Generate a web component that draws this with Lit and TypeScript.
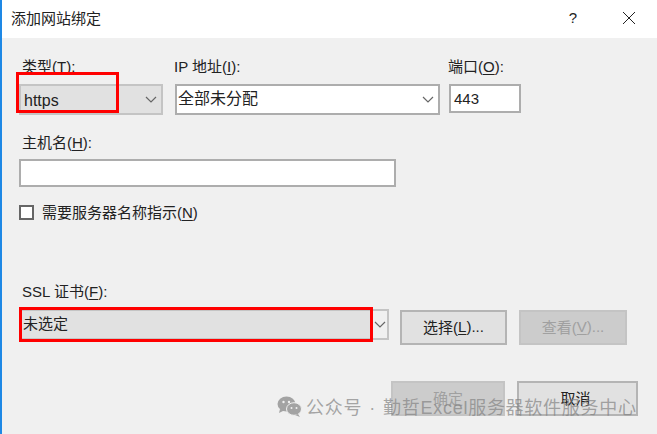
import { LitElement, html, css } from 'lit';
import { customElement } from 'lit/decorators.js';

const chevron = html`<svg class="chev" width="12" height="7" viewBox="0 0 12 7"><path d="M1 1l5 5 5-5" fill="none" stroke="#666" stroke-width="1.2"/></svg>`;

@customElement('app-root')
export class AppRoot extends LitElement {
  static styles = css`
    :host {
      display: block;
      width: 657px;
      height: 434px;
      position: relative;
      overflow: hidden;
      background: #f0f0f0;
      color: #222;
      font: 15px "Liberation Sans", "Noto Sans CJK SC", sans-serif;
      border-left: 2px solid #1e88e5;
      box-sizing: border-box;
    }

    header {
      height: 38px;
      background: #fff;
      display: flex;
      align-items: center;
      padding-left: 9px;
    }

    header span {
      flex-grow: 1;
      padding-bottom: 3px;
    }

    header .help {
      flex-grow: 0;
      font-size: 15px;
      margin-right: 45px;
    }

    header svg {
      margin-right: 21px;
      margin-bottom: 3px;
    }

    main {
      padding: 20px 0 0 17px;
    }

    .row {
      display: flex;
      align-items: flex-start;
    }

    .field {
      display: flex;
      flex-direction: column;
    }

    label {
      display: block;
      height: 18px;
      line-height: 18px;
      margin: 0 0 8px 3px;
      white-space: nowrap;
    }

    label.flush {
      margin-left: -1px;
    }

    u {
      text-underline-offset: 2px;
    }

    .box {
      box-sizing: border-box;
      display: flex;
      align-items: center;
      background: #fff;
      border: 2px solid #adadad;
      padding-left: 3px;
    }

    .box .text {
      flex-grow: 1;
    }

    .big {
      font-size: 16px;
    }

    .chev {
      margin-right: 4px;
    }

    .type {
      width: 144px;
      height: 31px;
      background: #e1e1e1;
      border-color: #c4c4c4;
      margin-right: 12px;
    }

    .type .text {
      padding-top: 2px;
    }

    .ip {
      width: 265px;
      height: 31px;
      margin-right: 9px;
      padding-left: 1px;
    }

    .ip .text {
      padding-bottom: 5px;
    }

    .port {
      width: 72px;
      height: 29px;
    }

    .host-block {
      margin-top: 19px;
    }

    .host {
      width: 377px;
      height: 28px;
    }

    .host-block label {
      margin-bottom: 7px;
    }

    .check {
      display: flex;
      align-items: center;
      margin-top: 18px;
      height: 15px;
    }

    .check i {
      box-sizing: border-box;
      width: 15px;
      height: 15px;
      background: #fff;
      border: 2px solid #666;
      margin-right: 8px;
    }

    .check span {
      padding-bottom: 3px;
    }

    .ssl-block {
      margin-top: 63px;
    }

    .ssl-row {
      display: flex;
      align-items: flex-start;
    }

    .ssl {
      width: 353px;
      height: 31px;
      background: #e1e1e1;
      border-color: #c4c4c4;
      padding-left: 2px;
    }

    .ssl .text {
      padding-bottom: 4px;
    }

    .ssl-arrow {
      box-sizing: border-box;
      width: 17px;
      height: 31px;
      border: 2px solid #c4c4c4;
      border-left: 0;
      display: flex;
      align-items: center;
      justify-content: center;
      margin-right: 11px;
    }

    .ssl-arrow .chev {
      margin: 0;
    }

    .btn {
      box-sizing: border-box;
      height: 35px;
      display: flex;
      align-items: center;
      justify-content: center;
      background: #e1e1e1;
      border: 2px solid #b4b4b4;
      margin-top: 1px;
      padding-bottom: 3px;
    }

    .btn.off {
      background: #ccc;
      border-color: #c4c4c4;
      color: #a0a0a0;
    }

    .pick {
      width: 107px;
      margin-right: 12px;
    }

    .view {
      width: 108px;
    }

    .footer {
      display: flex;
      margin: 35px 0 0 372px;
    }

    .ok {
      width: 114px;
      margin-right: 12px;
    }

    .cancel {
      width: 121px;
      padding-right: 4px;
    }

    .mark {
      position: absolute;
      box-sizing: border-box;
      border: 3px solid #f00;
    }

    .mark.a {
      left: 14px;
      top: 72px;
      width: 103px;
      height: 41px;
    }

    .mark.b {
      left: 17px;
      top: 307px;
      width: 354px;
      height: 35px;
    }

    .watermark {
      position: absolute;
      left: 275px;
      top: 393px;
      display: flex;
      align-items: center;
      gap: 4px;
      color: rgba(130, 130, 130, 0.7);
      font-size: 18px;
      letter-spacing: 0.72px;
      word-spacing: 1.4px;
      white-space: nowrap;
    }
  `;

  render() {
    return html`
      <header>
        <span>添加网站绑定</span>
        <span class="help">?</span>
        <svg width="14" height="14" viewBox="0 0 14 14"><path d="M1 1l12 12M13 1L1 13" stroke="#222" stroke-width="1" fill="none"/></svg>
      </header>

      <main>
        <div class="row">
          <div class="field">
            <label>类型(<u>T</u>):</label>
            <div class="box big type"><span class="text">https</span>${chevron}</div>
          </div>
          <div class="field">
            <label class="flush">IP 地址(<u>I</u>):</label>
            <div class="box big ip"><span class="text">全部未分配</span>${chevron}</div>
          </div>
          <div class="field">
            <label class="flush">端口(<u>O</u>):</label>
            <div class="box port">443</div>
          </div>
        </div>

        <div class="host-block">
          <label>主机名(<u>H</u>):</label>
          <div class="box host"></div>
        </div>

        <div class="check"><i></i><span>需要服务器名称指示(<u>N</u>)</span></div>

        <div class="ssl-block">
          <label>SSL 证书(<u>F</u>):</label>
          <div class="ssl-row">
            <div class="box ssl"><span class="text">未选定</span></div>
            <div class="ssl-arrow">${chevron}</div>
            <div class="btn pick">选择(<u>L</u>)...</div>
            <div class="btn off view">查看(<u>V</u>)...</div>
          </div>
        </div>

        <div class="footer">
          <div class="btn off ok">确定</div>
          <div class="btn cancel">取消</div>
        </div>
      </main>

      <div class="mark a"></div>
      <div class="mark b"></div>

      <div class="watermark">
        <svg width="25" height="21" viewBox="0 0 25 21">
          <ellipse cx="9.5" cy="8" rx="9" ry="7.5" fill="#a3a3a3"/>
          <path d="M3 13l-1 4 5-2.500z" fill="#a3a3a3"/>
          <ellipse cx="17" cy="13" rx="7.500" ry="6.300" fill="#a3a3a3" stroke="#f0f0f0"/>
          <path d="M21 18l2 3-5-2z" fill="#a3a3a3"/>
          <circle cx="6.500" cy="6" r="1.200" fill="#f0f0f0"/>
          <circle cx="12" cy="6" r="1.200" fill="#f0f0f0"/>
          <circle cx="14.500" cy="12" r="1" fill="#f0f0f0"/>
          <circle cx="19.500" cy="12" r="1" fill="#f0f0f0"/>
        </svg>
        <span>公众号 · 勤哲Excel服务器软件服务中心</span>
      </div>
    `;
  }
}
